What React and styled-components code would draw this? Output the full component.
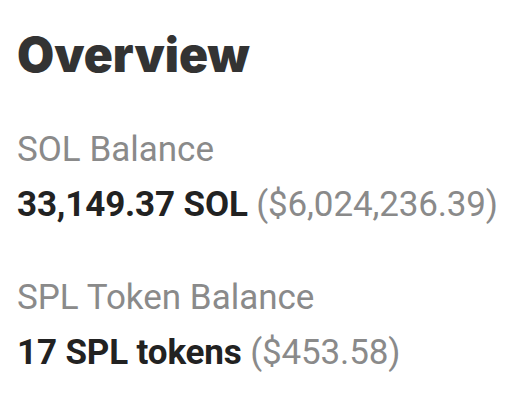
import React from "react";
import styled, { createGlobalStyle } from "styled-components";

const Global = createGlobalStyle`
  html, body { margin: 0; padding: 0; background: #ffffff; }
  body { font-family: Roboto, "Noto Sans", sans-serif; }
`;

const Page = styled.div`
  padding: 26px 17px 0 17px;
  display: flex;
  flex-direction: column;
`;

const Title = styled.h1`
  margin: 0 0 46px 0;
  font-family: Inter, "Noto Sans", sans-serif;
  font-weight: 900;
  font-size: 48px;
  line-height: 58px;
  color: #333333;
`;

const Section = styled.div`
  display: flex;
  flex-direction: column;
  gap: 15px;
  margin-bottom: ${(p) => p.$mb || 0}px;
`;

const Label = styled.div`
  font-size: 35px;
  line-height: 40px;
  color: #8a8a8a;
  font-weight: 400;
`;

const Value = styled.div`
  font-size: 35px;
  line-height: 40px;
  color: #222222;
  font-weight: 700;
  letter-spacing: -0.15px;
  white-space: nowrap;
`;

const Fiat = styled.span`
  font-weight: 400;
  color: #8a8a8a;
`;

export default function App() {
  return (
    <>
      <Global />
      <Page>
        <Title>Overview</Title>
        <Section $mb={53}>
          <Label>SOL Balance</Label>
          <Value>
            33,149.37 SOL <Fiat>($6,024,236.39)</Fiat>
          </Value>
        </Section>
        <Section>
          <Label>SPL Token Balance</Label>
          <Value>
            17 SPL tokens <Fiat>($453.58)</Fiat>
          </Value>
        </Section>
      </Page>
    </>
  );
}
